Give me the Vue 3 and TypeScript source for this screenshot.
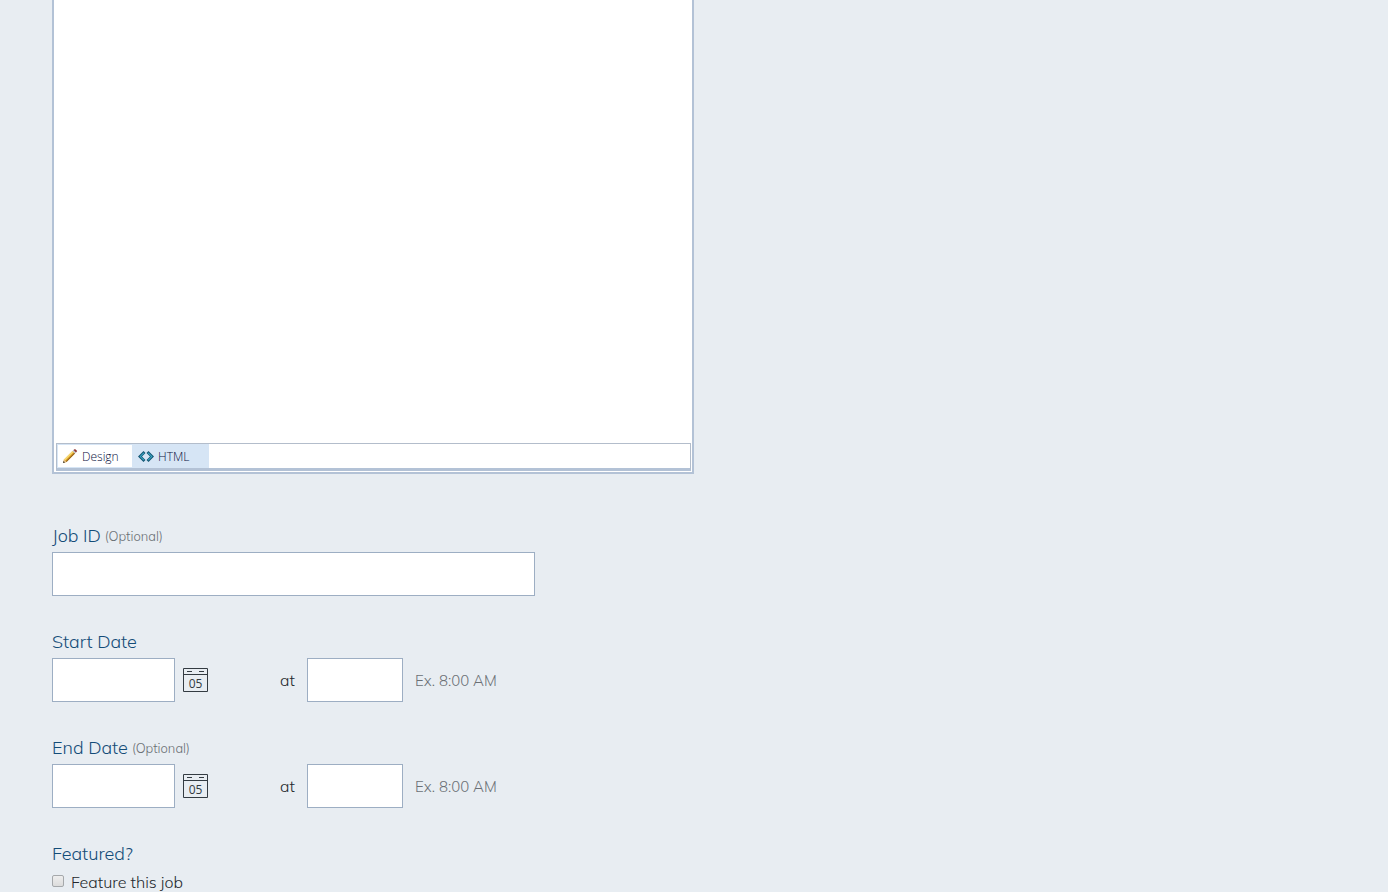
<script setup lang="ts">
import { reactive, ref } from 'vue'

interface DateField {
  id: string
  label: string
  optional: boolean
  date: string
  time: string
}

const description = ref('')
const mode = ref<'design' | 'html'>('design')
const jobId = ref('')
const featured = ref(false)
const dates = reactive<DateField[]>([
  { id: 'start', label: 'Start Date', optional: false, date: '', time: '' },
  { id: 'end', label: 'End Date', optional: true, date: '', time: '' },
])
</script>

<template>
  <form class="job-form" @submit.prevent>
    <section class="editor">
      <textarea v-model="description" class="canvas" aria-label="Job description"></textarea>
      <div class="modes">
        <button type="button" class="mode" :class="{ active: mode === 'design' }" @click="mode = 'design'">
          <svg width="16" height="16" viewBox="0 0 16 16" aria-hidden="true">
            <path d="M1 14l1-3.500L10.500 2l2.500 2.500L4.500 13z" fill="#e2a82c" />
            <path d="M2 10.500L10.500 2l1 1L3 11.500z" fill="#f8db77" />
            <path d="M3.800 12.300L12.200 3.700l.8.8L4.500 13z" fill="#94601c" />
            <path d="M10.500 2l1-1L14 3.500l-1 1z" fill="#b9bcc8" />
            <path d="M11.500 1L13 0 15.200 2 14 3.500z" fill="#8c3434" />
            <path d="M1 14l1-3.500 2.500 2.500z" fill="#e3c08d" />
            <path d="M1 14l.6-2 1.400 1.400z" fill="#333" />
          </svg>
          <span>Design</span>
        </button>
        <button type="button" class="mode" :class="{ active: mode === 'html' }" @click="mode = 'html'">
          <svg width="16" height="16" viewBox="0 0 16 16" aria-hidden="true">
            <path d="M5.500 2L7.500 4 4 7.500 7.500 11l-2 2L0 7.500zM10.500 2L8.500 4 12 7.500 8.500 11l2 2L16 7.500z" fill="#145673" />
            <path d="M5.500 3.500l.8.7L3 7.500l3.300 3.300-.8.7-4-4zM10.500 3.500l-.8.7L13 7.500l-3.300 3.300.8.7 4-4z" fill="#39a5c4" />
          </svg>
          <span>HTML</span>
        </button>
      </div>
    </section>

    <div class="field">
      <label class="title" for="job-id">Job ID<small>(Optional)</small></label>
      <input id="job-id" v-model="jobId" class="box wide" type="text" />
    </div>

    <div v-for="field in dates" :key="field.id" class="field">
      <label class="title" :for="`${field.id}-date`">{{ field.label }}<small v-if="field.optional">(Optional)</small></label>
      <div class="schedule">
        <input :id="`${field.id}-date`" v-model="field.date" class="box date" type="text" />
        <button type="button" class="picker" :aria-label="`Choose ${field.label}`">
          <svg width="25" height="26" viewBox="0 0 25 26" aria-hidden="true">
            <path d="M.5 1.500h24v23H.5zM.5 7.500h24M4 4.500h5M16 4.500h5" fill="none" stroke="#333b42" />
            <text x="12.500" y="21" text-anchor="middle">05</text>
          </svg>
        </button>
        <label class="at" :for="`${field.id}-time`">at</label>
        <input :id="`${field.id}-time`" v-model="field.time" class="box time" type="text" />
        <span class="hint">Ex. 8:00 AM</span>
      </div>
    </div>

    <fieldset class="featured">
      <legend class="title">Featured?</legend>
      <label class="choice">
        <input v-model="featured" type="checkbox" />
        <span>Feature this job</span>
      </label>
    </fieldset>
  </form>
</template>

<style>
body {
  margin: 0;
  background: #e8edf2;
}
</style>

<style scoped>
.job-form {
  box-sizing: border-box;
  padding: 0 52px;
  color: #24292e;
  font-family: Muli, Mulish, Lato, sans-serif;
  font-size: 16px;
  font-weight: 350;
}
.editor {
  box-sizing: border-box;
  width: 100%;
  max-width: 642px;
  margin-bottom: 50px;
  padding: 0 1px 1px 2px;
  border: 2px solid #b3c2d6;
  border-top: 0;
  background: #fff;
}
.canvas {
  display: block;
  box-sizing: border-box;
  width: 100%;
  height: 443px;
  border: 0;
  resize: none;
  outline: 0;
  background: #fff;
}
.modes {
  display: flex;
  box-sizing: border-box;
  height: 28px;
  border: 1px solid #b3bdcb;
  border-bottom: 3px solid #b3c2d6;
}
.mode {
  display: flex;
  align-items: center;
  gap: 4px;
  box-sizing: border-box;
  width: 76px;
  height: 100%;
  padding: 1px 4px 0;
  border: 1px solid #d6e5f5;
  background: #d6e5f5;
  color: #0a1040;
  font: 350 12px/16px "Open Sans", "Noto Sans", sans-serif;
}
.mode.active {
  background: #fff;
}
.field {
  margin-bottom: 34px;
}
.title {
  display: flex;
  align-items: center;
  gap: 4px;
  height: 24px;
  margin-bottom: 4px;
  padding: 0;
  color: #134c78;
  font-size: 18px;
  font-weight: 350;
  line-height: 24px;
}
.title small {
  color: #6b7075;
  font-size: 13px;
  font-weight: 300;
}
.box {
  box-sizing: border-box;
  display: block;
  height: 44px;
  padding: 0 8px;
  border: 1px solid #9daec3;
  border-radius: 0;
  background: #fff;
  font: inherit;
}
.wide {
  width: 100%;
  max-width: 483px;
}
.schedule {
  display: flex;
  align-items: center;
}
.date {
  width: 123px;
}
.time {
  width: 96px;
}
.picker {
  width: 26px;
  height: 26px;
  margin-left: 8px;
  padding: 0;
  border: 0;
  background: none;
}
.picker svg {
  display: block;
}
.picker text {
  fill: #333b42;
  font: 12px "Open Sans", sans-serif;
}
.at {
  width: 27px;
  margin-left: 71px;
}
.hint {
  margin-left: 12px;
  color: #6b7075;
  font-size: 15px;
  font-weight: 300;
}
.featured {
  margin: 0;
  padding: 0;
  border: 0;
}
.choice {
  display: flex;
  align-items: center;
  gap: 7px;
  height: 20px;
  margin-top: 2px;
  line-height: 20px;
}
.choice input {
  appearance: none;
  box-sizing: border-box;
  width: 12px;
  height: 12px;
  margin: 0 0 2px;
  border: 1px solid #a5a8ab;
  border-radius: 2px;
  background: linear-gradient(#eeeeee, #dcdcdc);
}
.choice input:checked {
  background: #1d5580;
}
</style>
